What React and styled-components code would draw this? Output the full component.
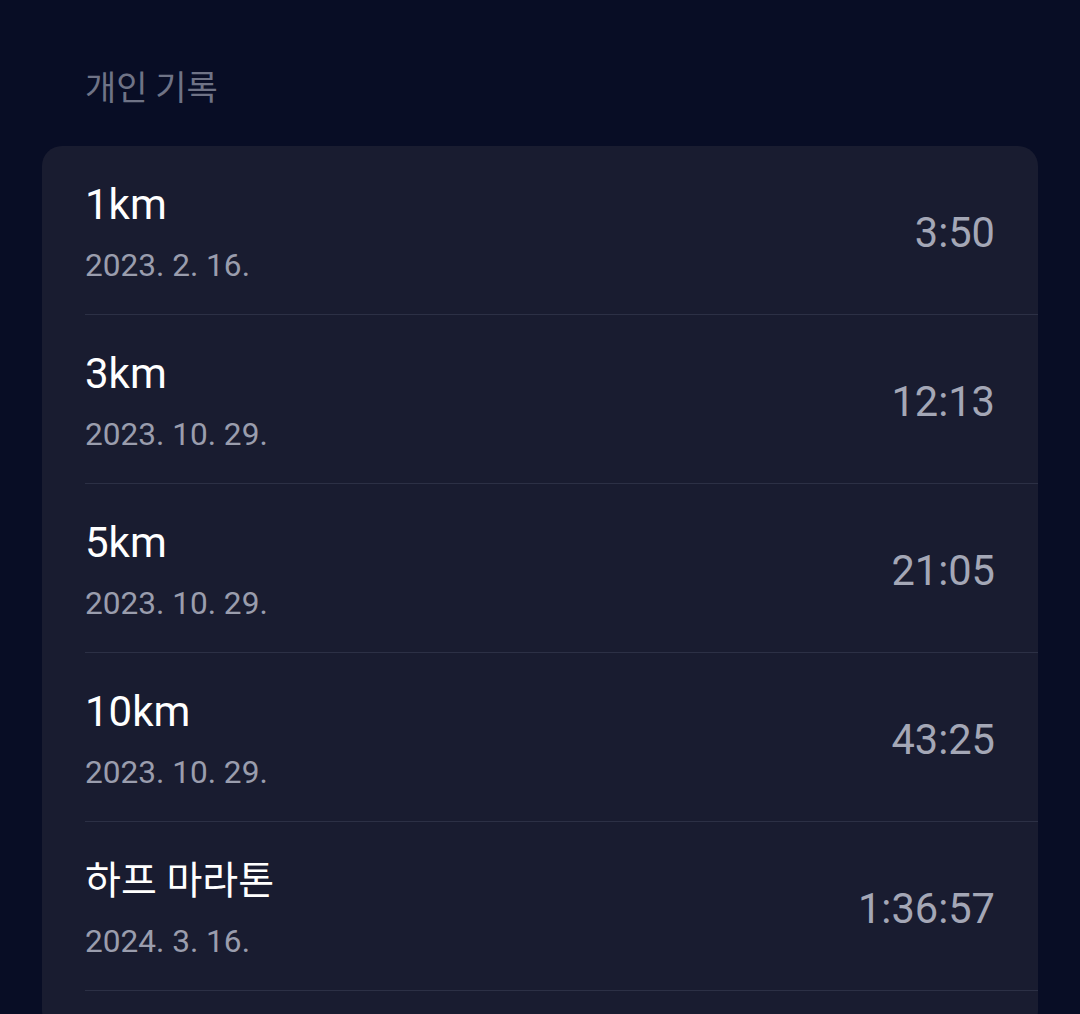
import styled, { createGlobalStyle } from "styled-components";

const records = [
  { id: 1, name: "1km", date: "2023. 2. 16.", time: "3:50" },
  { id: 2, name: "3km", date: "2023. 10. 29.", time: "12:13" },
  { id: 3, name: "5km", date: "2023. 10. 29.", time: "21:05" },
  { id: 4, name: "10km", date: "2023. 10. 29.", time: "43:25" },
  { id: 5, name: "하프 마라톤", date: "2024. 3. 16.", time: "1:36:57" },
];

const hasHangul = (text) => /[\uac00-\ud7a3]/.test(text);

const GlobalStyle = createGlobalStyle`
  html, body {
    margin: 0;
    padding: 0;
    background: #080d25;
  }
  body {
    font-family: Roboto, "Noto Sans CJK KR", sans-serif;
    -webkit-font-smoothing: antialiased;
  }
`;

function App() {
  return (
    <>
      <GlobalStyle />
      <StyledPage>
        <StyledHeader>개인 기록</StyledHeader>
        <StyledCard>
          {records.map((record) => (
            <StyledRow key={record.id}>
              <StyledInfo>
                <StyledName $hangul={hasHangul(record.name)}>
                  {record.name}
                </StyledName>
                <StyledDate>{record.date}</StyledDate>
              </StyledInfo>
              <StyledTime>{record.time}</StyledTime>
            </StyledRow>
          ))}
        </StyledCard>
      </StyledPage>
    </>
  );
}

const StyledPage = styled.div`
  padding: 66px 42px 0;
  min-height: 100vh;
  box-sizing: border-box;
`;

const StyledHeader = styled.h2`
  margin: 0 0 40px 43px;
  font-family: "Noto Sans CJK KR", sans-serif;
  font-weight: 400;
  font-size: 34px;
  line-height: 40px;
  color: #6f7386;
`;

const StyledCard = styled.div`
  background: #191c30;
  border-radius: 20px;
  padding-bottom: 40px;
`;

const StyledRow = styled.div`
  display: flex;
  align-items: center;
  justify-content: space-between;
  box-sizing: border-box;
  height: 169px;
  margin-left: 43px;
  padding: 5px 43px 0 0;
  border-bottom: 1px solid #2c3045;
`;

const StyledInfo = styled.div`
  display: flex;
  flex-direction: column;
  gap: 19px;
`;

const StyledName = styled.div`
  font-family: Roboto, "Noto Sans CJK KR", sans-serif;
  font-size: ${(props) => (props.$hangul ? "39px" : "42px")};
  line-height: 48px;
  color: #ffffff;
`;

const StyledDate = styled.div`
  font-family: Roboto, sans-serif;
  font-size: 31.6px;
  line-height: 36px;
  color: #9a9dad;
`;

const StyledTime = styled.div`
  font-family: Roboto, sans-serif;
  font-size: 41.6px;
  line-height: 48px;
  color: #a4a7b6;
`;

export default App;
